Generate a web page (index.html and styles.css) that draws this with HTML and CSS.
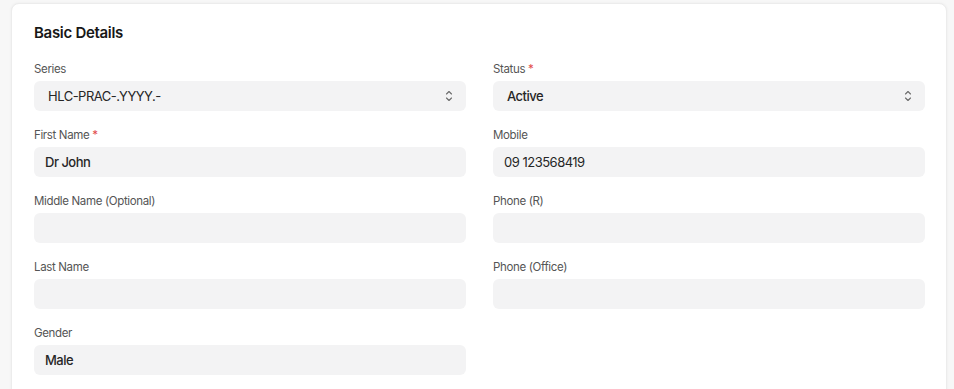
FILE: index.html
```html
<!DOCTYPE html>
<html lang="en">

<head>
  <meta charset="UTF-8">
  <meta name="viewport" content="width=device-width, initial-scale=1.0">
  <title>Healthcare Practitioner</title>
  <link rel="stylesheet" href="styles.css">
</head>

<body>
  <section class="card">
    <h4 class="card__title">Basic Details</h4>
    <div class="grid">
      <div class="field">
        <label class="field__label">Series</label>
        <div class="control control--select">
          <span class="control__value">HLC-PRAC-.YYYY.-</span>
          <svg class="control__arrow" width="8" height="12" viewBox="0 0 8 12" fill="none" stroke="#6b6b6b" stroke-width="1.1" stroke-linecap="round" stroke-linejoin="round">
            <path d="M1.5 4 4 1.5 6.5 4" />
            <path d="M1.5 8 4 10.5 6.5 8" />
          </svg>
        </div>
      </div>
      <div class="field">
        <label class="field__label">Status <span class="req">*</span></label>
        <div class="control control--select">
          <span class="control__value control__value--strong">Active</span>
          <svg class="control__arrow" width="8" height="12" viewBox="0 0 8 12" fill="none" stroke="#6b6b6b" stroke-width="1.1" stroke-linecap="round" stroke-linejoin="round">
            <path d="M1.5 4 4 1.5 6.5 4" />
            <path d="M1.5 8 4 10.5 6.5 8" />
          </svg>
        </div>
      </div>

      <div class="field">
        <label class="field__label">First Name <span class="req">*</span></label>
        <div class="control"><span class="control__value control__value--strong">Dr John</span></div>
      </div>
      <div class="field">
        <label class="field__label">Mobile</label>
        <div class="control"><span class="control__value">09 123568419</span></div>
      </div>

      <div class="field">
        <label class="field__label">Middle Name (Optional)</label>
        <div class="control"></div>
      </div>
      <div class="field">
        <label class="field__label">Phone (R)</label>
        <div class="control"></div>
      </div>

      <div class="field">
        <label class="field__label">Last Name</label>
        <div class="control"></div>
      </div>
      <div class="field">
        <label class="field__label">Phone (Office)</label>
        <div class="control"></div>
      </div>

      <div class="field">
        <label class="field__label">Gender</label>
        <div class="control"><span class="control__value control__value--strong">Male</span></div>
      </div>
    </div>
  </section>
</body>

</html>
```

FILE: styles.css
```css
html,
body {
  height: 100%;
  box-sizing: border-box;
}

body {
  margin: 0;
  padding: 3px 7px 0 11px;
  background: #f7f7f7;
  font-family: Inter, "Noto Sans", sans-serif;
  color: #171717;
  overflow: hidden;
}

.card {
  background: #fff;
  border: 1px solid #ececec;
  border-radius: 8px;
  box-shadow: 0 0 3px rgba(0, 0, 0, 0.05);
  padding: 19px 21px 40px 22px;
  min-height: 420px;
  box-sizing: border-box;
}

.card__title {
  margin: 0 0 18px;
  font-size: 15px;
  line-height: 20px;
  font-weight: 600;
  letter-spacing: -0.3px;
  color: #171717;
}

.grid {
  display: grid;
  grid-template-columns: 432px 432px;
  column-gap: 27px;
  row-gap: 16px;
}

.field {
  display: flex;
  flex-direction: column;
  gap: 4px;
}

.field__label {
  font-size: 11.5px;
  line-height: 16px;
  letter-spacing: -0.35px;
  color: #555;
}

.req {
  color: #e24c4c;
}

.control {
  height: 30px;
  border-radius: 6px;
  background: #f3f3f4;
  display: flex;
  align-items: center;
  padding: 0 11px;
  font-size: 13px;
  letter-spacing: -0.5px;
}

.control--select {
  padding: 0 14px;
  justify-content: space-between;
}

.control__value {
  color: #262626;
}

.control__value--strong {
  font-weight: 500;
}

.control__arrow {
  margin-right: -1px;
}
```
